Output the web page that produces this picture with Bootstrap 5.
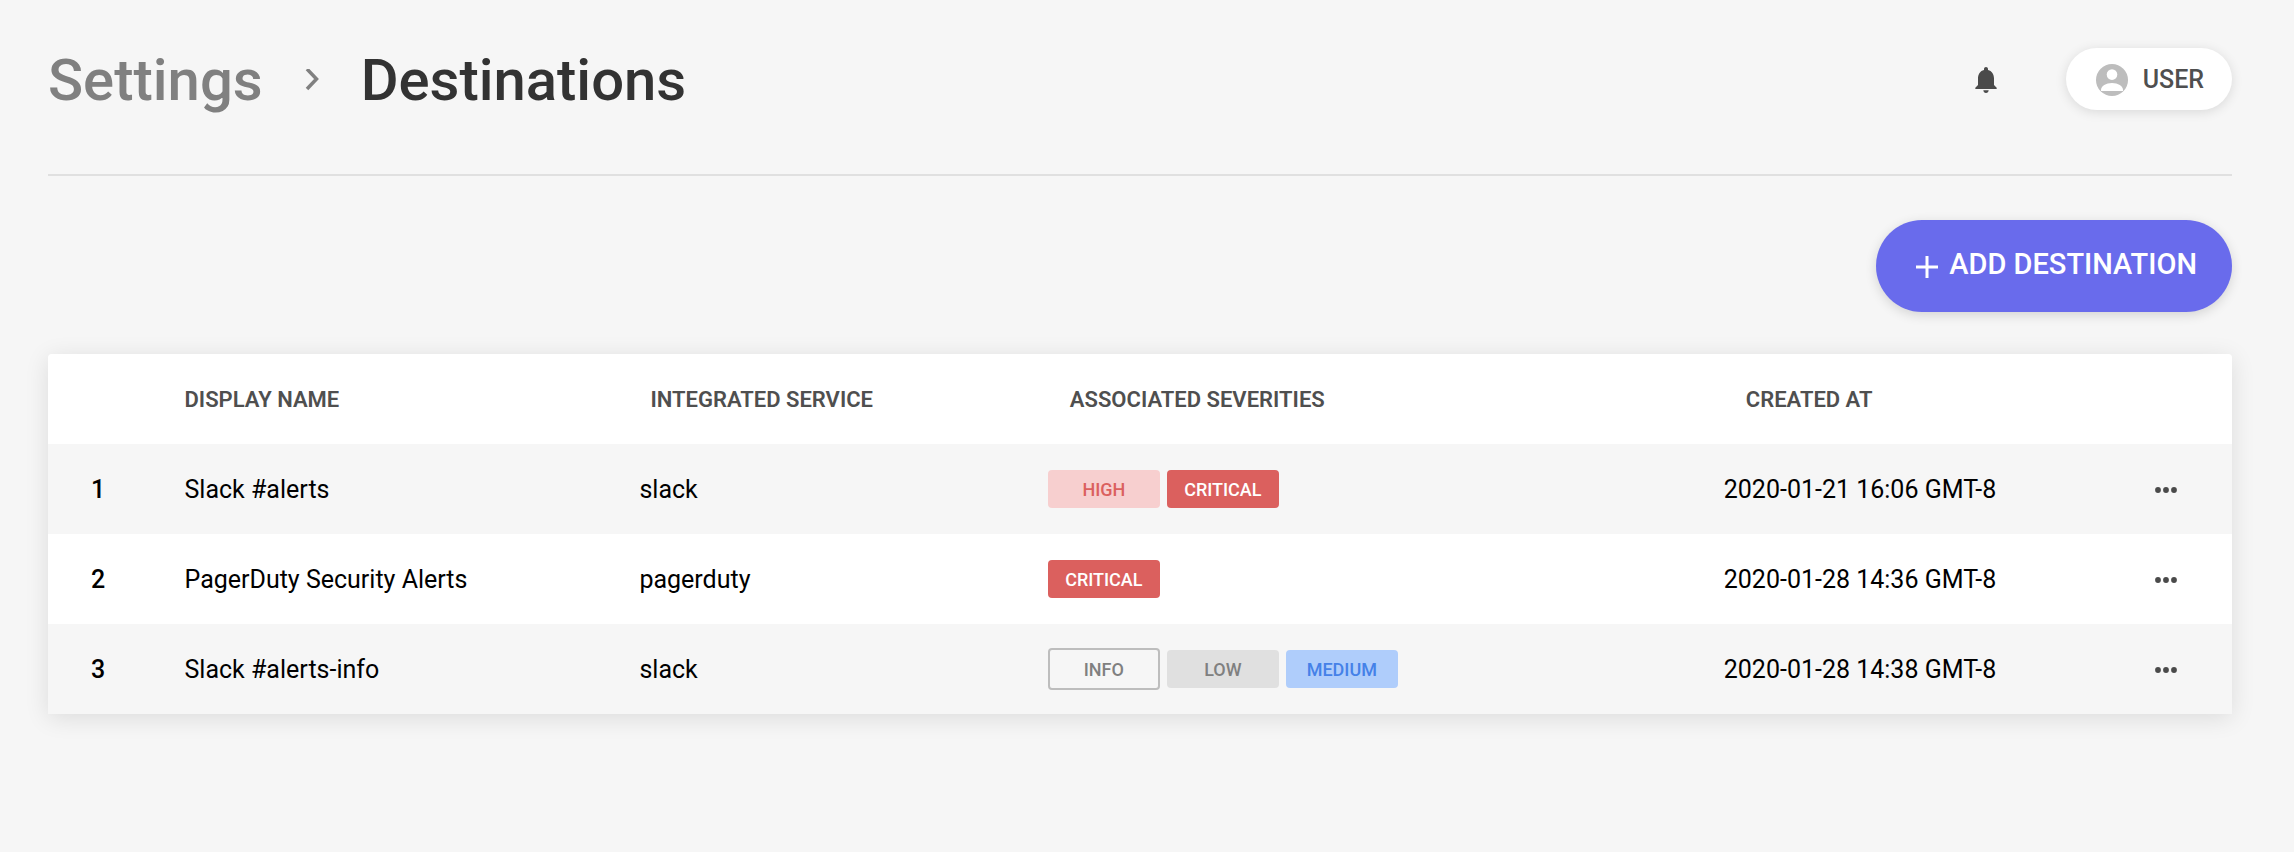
<!DOCTYPE html>
<html lang="en">
<head>
<meta charset="utf-8">
<meta name="viewport" content="width=device-width, initial-scale=1">
<title>Destinations</title>
<link rel="stylesheet" href="https://cdn.jsdelivr.net/npm/bootstrap@5.3.0/dist/css/bootstrap.min.css">
<style>
  body { font-family: Roboto, "Liberation Sans", sans-serif; background: #f6f6f6; color: #000; }
  .page { padding: 32px 62px 32px 48px; }
  .topbar { padding-bottom: 48px; min-height: 144px; border-bottom: 2px solid #e0e0e0; }
  .crumbs { gap: 42px; padding-top: 2px; font-size: 58px; line-height: 64px; font-weight: 500; color: #808080; }
  .crumbs a { color: inherit; }
  .crumbs h1 { font-size: inherit; line-height: inherit; font-weight: inherit; color: #333; }
  .icon-btn { color: #4a4a4a; line-height: 0; }
  .user-btn { height: 62px; padding: 2px 28px 0 30px; gap: 15px; border-radius: 31px; background: #fff; color: #4f4f4f; font-size: 25px; font-weight: 500; box-shadow: 0 2px 12px rgba(0,0,0,.12); }
  .add-row { padding: 44px 0 42px; }
  .add-btn { height: 92px; padding: 0 35px 2px 40px; gap: 11px; border-radius: 46px; background: #696bec; color: #fff; font-size: 29px; font-weight: 500; box-shadow: 0 3px 12px rgba(0,0,0,.14); }
  .panel { box-shadow: 0 4px 24px rgba(0,0,0,.11); border-radius: 4px 4px 0 0; overflow: hidden; }
  .dest { table-layout: fixed; font-size: 25px; }
  .dest th, .dest td { height: 90px; padding: 0; vertical-align: middle; border: 0; color: #000; background: #fff; }
  .dest tbody tr:nth-child(odd) > * { background: #f6f6f6; }
  .dest thead th { font-size: 22px; font-weight: 600; color: #4f4f4f; }
  .dest thead .shift-sm { padding-left: 11px; }
  .dest thead .shift { padding-left: 22px; }
  .dest tbody .txt { padding-top: 2px; }
  .dest .num { padding-left: 43px; font-weight: 500; }
  .sevs { gap: 7px; }
  .sev { min-width: 112px; height: 38px; border-radius: 4px; font-size: 18px; font-weight: 500; }
  .sev-high { background: #f7cfcf; color: #db605e; }
  .sev-critical { background: #db605e; color: #fff; }
  .sev-info { height: 42px; border: 2px solid #bdbdbd; color: #808080; }
  .sev-low { background: #e0e0e0; color: #808080; }
  .sev-medium { background: #afcdfb; color: #4581e8; }
</style>
</head>
<body>
<main class="page">
  <header class="topbar d-flex align-items-center justify-content-between">
    <nav class="crumbs d-flex align-items-center" aria-label="Breadcrumb">
      <a href="#" class="text-decoration-none">Settings</a>
      <svg width="14" height="22" viewBox="0 0 14 22" fill="none" stroke="currentColor" stroke-width="3.500" aria-hidden="true"><path d="M2 0 11.500 10 2 20"/></svg>
      <h1 class="m-0">Destinations</h1>
    </nav>
    <div class="d-flex align-items-center">
      <button type="button" class="icon-btn btn p-0 border-0 me-5" aria-label="Notifications">
        <svg width="32" height="32" viewBox="0 0 24 24" fill="currentColor" aria-hidden="true"><path d="M12 22.500c1.100 0 2-.9 2-2h-4c0 1.100.89 2 2 2zm6-6v-5c0-3.070-1.640-5.640-4.500-6.320V4.500c0-.83-.67-1.500-1.500-1.500s-1.500.67-1.500 1.500v.68C7.630 5.860 6 8.420 6 11.500v5l-2 2v1h16v-1l-2-2z"/></svg>
      </button>
      <button type="button" class="user-btn btn border-0 d-flex align-items-center ms-3">
        <svg width="32" height="32" viewBox="0 0 32 32" aria-hidden="true"><circle cx="16" cy="16" r="16" fill="#bdbdbd"/><circle cx="16" cy="10.600" r="5.300" fill="#fff"/><path d="M5 27v-1c0-4 5-7 11-7s11 3 11 7v1z" fill="#fff"/></svg>
        <span>USER</span>
      </button>
    </div>
  </header>

  <div class="add-row d-flex justify-content-end">
    <button type="button" class="add-btn btn border-0 d-flex align-items-center">
      <svg class="mt-1" width="22" height="22" viewBox="0 0 22 22" stroke="currentColor" stroke-width="3" aria-hidden="true"><path d="M11 0v22M0 11h22"/></svg>
      <span>ADD DESTINATION</span>
    </button>
  </div>

  <div class="panel">
    <table class="dest table m-0">
      <colgroup><col style="width:6.250%"><col style="width:20.830%"><col style="width:18.700%"><col style="width:30.950%"><col style="width:19.700%"><col></colgroup>
      <thead>
        <tr><th></th><th scope="col">DISPLAY NAME</th><th scope="col" class="shift-sm">INTEGRATED SERVICE</th><th scope="col" class="shift">ASSOCIATED SEVERITIES</th><th scope="col" class="shift">CREATED AT</th><th></th></tr>
      </thead>
      <tbody>
        <tr>
          <th scope="row" class="num txt">1</th><td class="txt">Slack #alerts</td><td class="txt">slack</td>
          <td><div class="sevs d-flex align-items-center"><span class="sev sev-high d-flex align-items-center justify-content-center">HIGH</span><span class="sev sev-critical d-flex align-items-center justify-content-center">CRITICAL</span></div></td>
          <td class="txt">2020-01-21 16:06 GMT-8</td>
          <td class="txt"><button type="button" class="icon-btn btn d-block p-0 border-0" aria-label="Options"><svg width="24" height="8" viewBox="0 0 24 8" fill="currentColor" aria-hidden="true"><circle cx="4" cy="4" r="2.900"/><circle cx="12" cy="4" r="2.900"/><circle cx="20" cy="4" r="2.900"/></svg></button></td>
        </tr>
        <tr>
          <th scope="row" class="num txt">2</th><td class="txt">PagerDuty Security Alerts</td><td class="txt">pagerduty</td>
          <td><div class="sevs d-flex align-items-center"><span class="sev sev-critical d-flex align-items-center justify-content-center">CRITICAL</span></div></td>
          <td class="txt">2020-01-28 14:36 GMT-8</td>
          <td class="txt"><button type="button" class="icon-btn btn d-block p-0 border-0" aria-label="Options"><svg width="24" height="8" viewBox="0 0 24 8" fill="currentColor" aria-hidden="true"><circle cx="4" cy="4" r="2.900"/><circle cx="12" cy="4" r="2.900"/><circle cx="20" cy="4" r="2.900"/></svg></button></td>
        </tr>
        <tr>
          <th scope="row" class="num txt">3</th><td class="txt">Slack #alerts-info</td><td class="txt">slack</td>
          <td><div class="sevs d-flex align-items-center"><span class="sev sev-info d-flex align-items-center justify-content-center">INFO</span><span class="sev sev-low d-flex align-items-center justify-content-center">LOW</span><span class="sev sev-medium d-flex align-items-center justify-content-center">MEDIUM</span></div></td>
          <td class="txt">2020-01-28 14:38 GMT-8</td>
          <td class="txt"><button type="button" class="icon-btn btn d-block p-0 border-0" aria-label="Options"><svg width="24" height="8" viewBox="0 0 24 8" fill="currentColor" aria-hidden="true"><circle cx="4" cy="4" r="2.900"/><circle cx="12" cy="4" r="2.900"/><circle cx="20" cy="4" r="2.900"/></svg></button></td>
        </tr>
      </tbody>
    </table>
  </div>
</main>
<script src="https://cdn.jsdelivr.net/npm/bootstrap@5.3.0/dist/js/bootstrap.bundle.min.js"></script>
</body>
</html>
